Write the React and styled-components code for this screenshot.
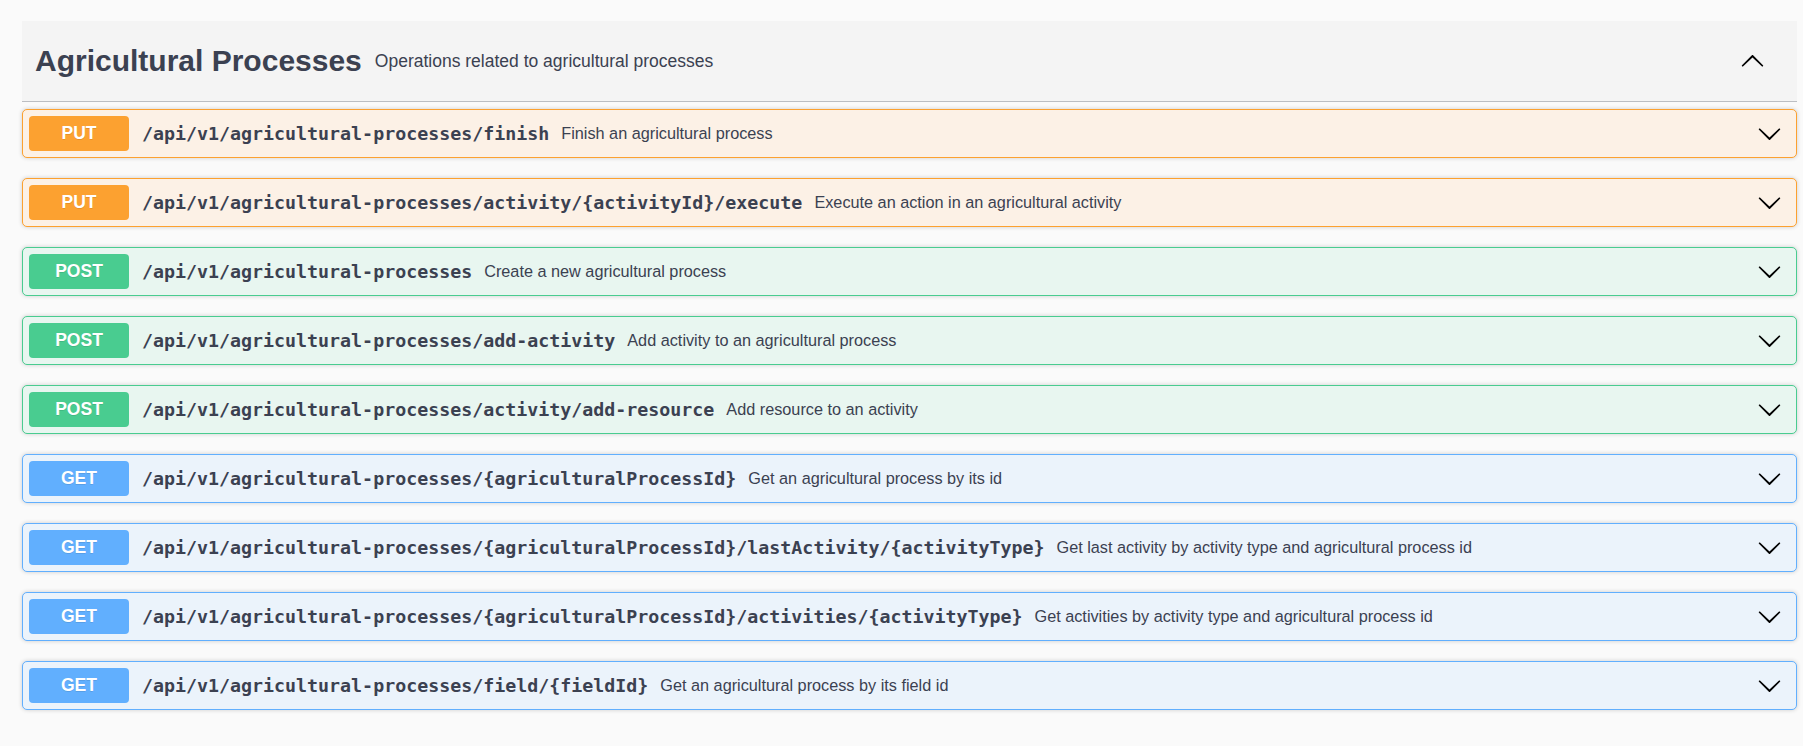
import React from 'react'
import styled, { createGlobalStyle } from 'styled-components'

const GlobalStyle = createGlobalStyle`
  body {
    margin: 0;
    background: #fafafa;
    font-family: "Liberation Sans", Arial, sans-serif;
  }
`

const METHODS = {
  put: { color: '#fca130', bg: '#fcf1e6' },
  post: { color: '#49cc90', bg: '#e8f6f0' },
  get: { color: '#61affe', bg: '#ebf3fb' },
}

const Page = styled.div`
  padding: 21px 6px 30px 22px;
`

const TagHeader = styled.div`
  display: flex;
  align-items: center;
  height: 80px;
  padding: 0 32px 0 13px;
  background: #f4f4f4;
  border-bottom: 1px solid rgba(59, 65, 81, 0.3);
  margin-bottom: 7px;
`

const TagTitle = styled.h3`
  margin: 0;
  font-size: 30px;
  font-weight: 700;
  color: #3b4151;
`

const TagDesc = styled.small`
  flex: 1;
  padding: 0 13px;
  font-size: 17.5px;
  color: #3b4151;
`

const OpBlock = styled.div`
  display: flex;
  align-items: center;
  padding: 6px;
  margin-bottom: 20px;
  border: 1px solid ${p => METHODS[p.$method].color};
  border-radius: 5px;
  background: ${p => METHODS[p.$method].bg};
  box-shadow: 0 0 4px rgba(0, 0, 0, 0.19);
`

const Badge = styled.span`
  display: flex;
  align-items: center;
  justify-content: center;
  width: 100px;
  height: 35px;
  flex-shrink: 0;
  border-radius: 4px;
  background: ${p => METHODS[p.$method].color};
  color: #fff;
  font-size: 17.5px;
  font-weight: 700;
  text-transform: uppercase;
  text-shadow: 0 1px 0 rgba(0, 0, 0, 0.1);
`

const Path = styled.span`
  padding: 0 12px 0 13px;
  font-family: "DejaVu Sans Mono", "Liberation Mono", monospace;
  font-size: 18.3px;
  font-weight: 700;
  color: #3b4151;
  white-space: nowrap;
`

const Summary = styled.span`
  flex: 1;
  font-size: 16.25px;
  color: #3b4151;
`

const Arrow = styled.svg`
  width: 25px;
  height: 25px;
  flex-shrink: 0;
  margin-right: ${p => p.$right || 0}px;
  transform: ${p => (p.$up ? 'rotate(180deg)' : 'none')};
`

const Chevron = ({ up, right }) => (
  <Arrow viewBox="0 0 20 20" $up={up} $right={right}>
    <path
      fill="#000"
      d="M17.418 6.109c.272-.268.709-.268.979 0s.271.701 0 .969l-7.908 7.83c-.27.268-.707.268-.979 0l-7.908-7.83c-.27-.268-.27-.701 0-.969.271-.268.709-.268.979 0L10 13.25l7.418-7.141z"
    />
  </Arrow>
)

const ops = [
  { method: 'put', path: '/api/v1/agricultural-processes/finish', summary: 'Finish an agricultural process' },
  { method: 'put', path: '/api/v1/agricultural-processes/activity/{activityId}/execute', summary: 'Execute an action in an agricultural activity' },
  { method: 'post', path: '/api/v1/agricultural-processes', summary: 'Create a new agricultural process' },
  { method: 'post', path: '/api/v1/agricultural-processes/add-activity', summary: 'Add activity to an agricultural process' },
  { method: 'post', path: '/api/v1/agricultural-processes/activity/add-resource', summary: 'Add resource to an activity' },
  { method: 'get', path: '/api/v1/agricultural-processes/{agriculturalProcessId}', summary: 'Get an agricultural process by its id' },
  { method: 'get', path: '/api/v1/agricultural-processes/{agriculturalProcessId}/lastActivity/{activityType}', summary: 'Get last activity by activity type and agricultural process id' },
  { method: 'get', path: '/api/v1/agricultural-processes/{agriculturalProcessId}/activities/{activityType}', summary: 'Get activities by activity type and agricultural process id' },
  { method: 'get', path: '/api/v1/agricultural-processes/field/{fieldId}', summary: 'Get an agricultural process by its field id' },
]

export default function App() {
  return (
    <Page>
      <GlobalStyle />
      <TagHeader>
        <TagTitle>Agricultural Processes</TagTitle>
        <TagDesc>Operations related to agricultural processes</TagDesc>
        <Chevron up />
      </TagHeader>
      {ops.map((op, i) => (
        <OpBlock key={i} $method={op.method}>
          <Badge $method={op.method}>{op.method}</Badge>
          <Path>{op.path}</Path>
          <Summary>{op.summary}</Summary>
          <Chevron right={8} />
        </OpBlock>
      ))}
    </Page>
  )
}
